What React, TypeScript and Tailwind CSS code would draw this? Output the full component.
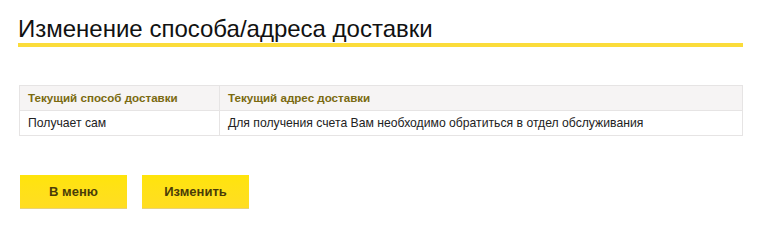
export default function App() {
  return (
    <div className="w-[760px] h-[247px] bg-white pl-[18px] pt-[15px] font-['Liberation_Sans',Arial,sans-serif]">
      <h1 className="w-[725px] text-[24px] leading-[28px] text-[#111] border-b-4 border-[#fbdc3a] font-normal">
        Изменение способа/адреса доставки
      </h1>

      <table className="mt-[38px] ml-px w-[724px] border-collapse text-[12.2px] leading-[14px]">
        <thead>
          <tr className="bg-[#f6f4f4]">
            <th className="w-[200px] h-[25px] border border-[#e6e4e4] px-[8px] text-left text-[11.6px] font-bold text-[#7a6a10]">
              Текущий способ доставки
            </th>
            <th className="h-[25px] border border-[#e6e4e4] px-[8px] text-left text-[11.6px] font-bold text-[#7a6a10]">
              Текущий адрес доставки
            </th>
          </tr>
        </thead>
        <tbody>
          <tr>
            <td className="h-[25px] border border-[#e6e4e4] px-[8px] text-[#222]">Получает сам</td>
            <td className="h-[25px] border border-[#e6e4e4] px-[8px] text-[#222]">
              Для получения счета Вам необходимо обратиться в отдел обслуживания
            </td>
          </tr>
        </tbody>
      </table>

      <div className="mt-[39px] ml-[2px] flex gap-[15px]">
        <button className="w-[107px] h-[33px] bg-gradient-to-b from-[#ffe40a] to-[#ffdd22] shadow-[0_1px_0_#e8d27a] text-[13px] font-bold text-[#4a3c08]">
          В меню
        </button>
        <button className="w-[107px] h-[33px] bg-gradient-to-b from-[#ffe40a] to-[#ffdd22] shadow-[0_1px_0_#e8d27a] text-[13px] font-bold text-[#4a3c08]">
          Изменить
        </button>
      </div>
    </div>
  );
}
